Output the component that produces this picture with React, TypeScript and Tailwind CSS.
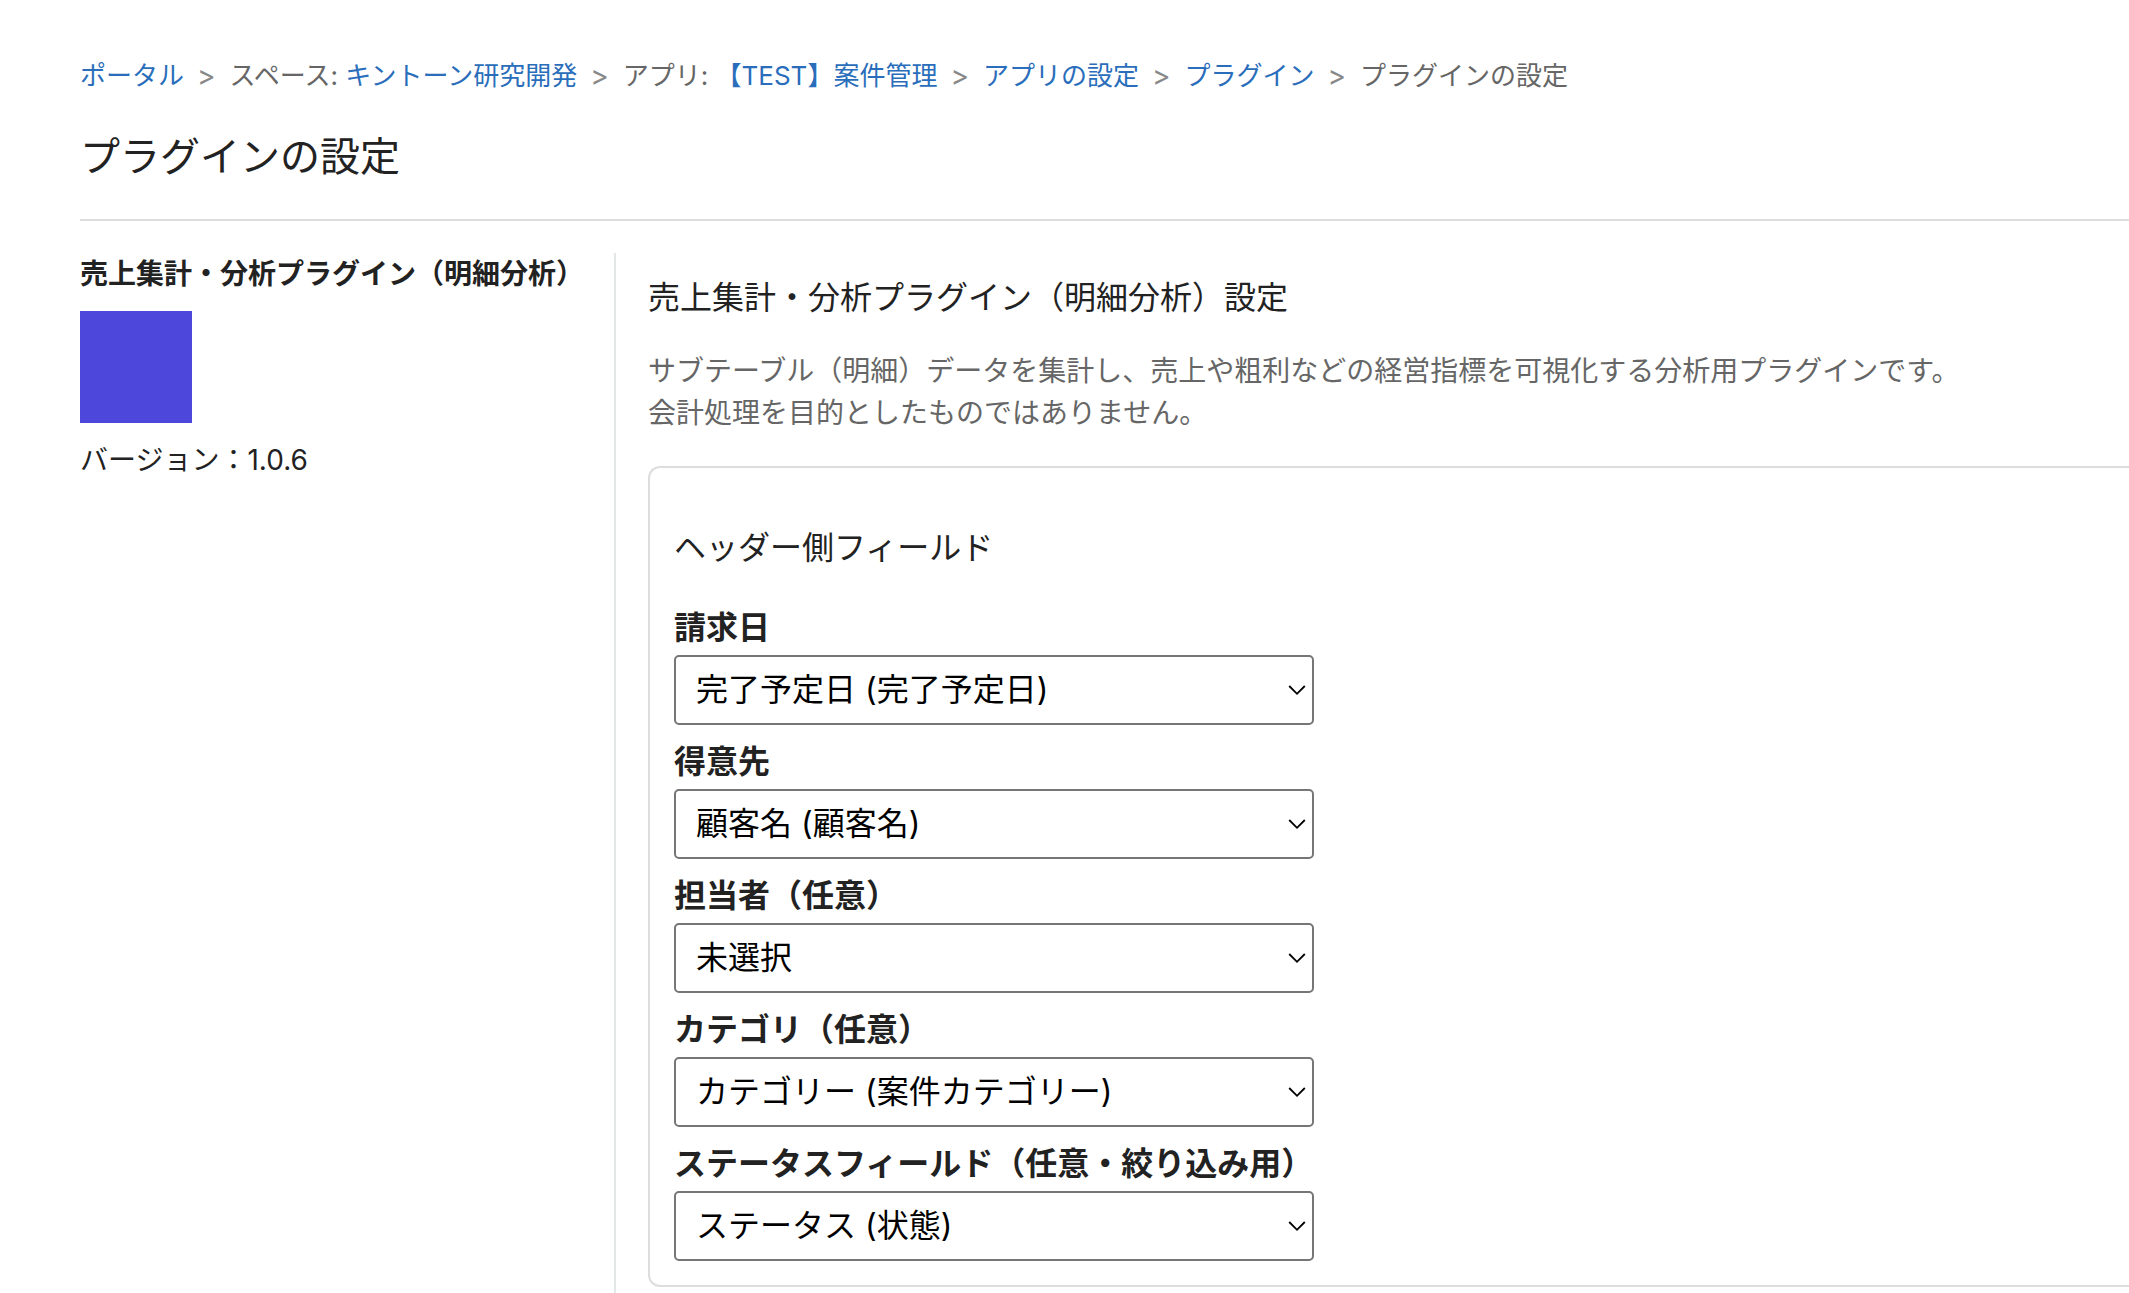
import React from 'react';

type Crumb = {
  prefix?: string;
  label: string;
  href?: string;
};

type Field = {
  id: string;
  label: string;
  value: string;
};

const crumbs: Crumb[] = [
  { label: 'ポータル', href: '#portal' },
  { prefix: 'スペース: ', label: 'キントーン研究開発', href: '#space' },
  { prefix: 'アプリ: ', label: '【TEST】案件管理', href: '#app' },
  { label: 'アプリの設定', href: '#settings' },
  { label: 'プラグイン', href: '#plugins' },
  { label: 'プラグインの設定' },
];

const headerFields: Field[] = [
  { id: 'billing-date', label: '請求日', value: '完了予定日 (完了予定日)' },
  { id: 'customer', label: '得意先', value: '顧客名 (顧客名)' },
  { id: 'assignee', label: '担当者（任意）', value: '未選択' },
  { id: 'category', label: 'カテゴリ（任意）', value: 'カテゴリー (案件カテゴリー)' },
  { id: 'status', label: 'ステータスフィールド（任意・絞り込み用）', value: 'ステータス (状態)' },
];

function Breadcrumbs() {
  return (
    <nav aria-label="パンくずリスト">
      <ol className="flex flex-wrap items-center text-[26px] leading-10 text-[#666666]">
        {crumbs.map((crumb, i) => (
          <li key={crumb.label} className="flex items-center whitespace-pre">
            {i > 0 && <span aria-hidden="true" className="pl-[13px] pr-[14px] text-[28px] leading-10 text-[#888888]">&gt;</span>}
            {crumb.prefix}
            {crumb.href ? (
              <a href={crumb.href} className="text-[#2a6ebb] hover:underline">{crumb.label}</a>
            ) : (
              <span aria-current="page">{crumb.label}</span>
            )}
          </li>
        ))}
      </ol>
    </nav>
  );
}

function SelectField({ id, label, value }: Field) {
  return (
    <div>
      <label htmlFor={id} className="block mb-[3px] text-[32px] leading-[48px] font-bold">{label}</label>
      <div className="relative w-full max-w-[640px]">
        <select
          id={id}
          defaultValue={value}
          className="block w-full h-[70px] pl-5 pr-12 appearance-none bg-white border-2 border-[#767676] rounded-[5px] text-[32px] leading-[48px] text-black"
        >
          <option value={value}>{value}</option>
          {value !== '未選択' && <option value="未選択">未選択</option>}
        </select>
        <svg className="absolute right-2 top-1/2 -translate-y-1/2 pointer-events-none" width="18" height="12" viewBox="0 0 18 12" fill="none" stroke="black" strokeWidth="1.8">
          <path d="M1.2 2L9 9.8L16.8 2" />
        </svg>
      </div>
    </div>
  );
}

export default function App() {
  return (
    <div className="min-h-screen flex flex-col pl-20 bg-white text-[#222222] font-['Inter','Noto_Sans_CJK_JP',sans-serif]">
      <header className="pt-14 pb-8 border-b-2 border-[#dddddd]">
        <Breadcrumbs />
        <h1 className="mt-[31px] text-[40px] leading-[60px]">プラグインの設定</h1>
      </header>

      <div className="flex-1 flex pt-8">
        <aside className="w-[534px] shrink-0">
          <h2 className="text-[28px] leading-[42px] font-bold whitespace-nowrap">売上集計・分析プラグイン（明細分析）</h2>
          <div className="w-28 h-28 mt-4 bg-[#4d47db]" />
          <p className="mt-4 text-[28px] leading-[42px]">バージョン：1.0.6</p>
        </aside>

        <main className="flex-1 min-w-0 pl-8 border-l-2 border-[#e3e7e8]">
          <h2 className="mt-[21px] text-[32px] leading-[48px]">売上集計・分析プラグイン（明細分析）設定</h2>
          <p className="mt-7 text-[28px] leading-[42px] text-[#666666]">
            サブテーブル（明細）データを集計し、売上や粗利などの経営指標を可視化する分析用プラグインです。
            <br />
            会計処理を目的としたものではありません。
          </p>

          <section className="mt-8 p-6 border-2 border-r-0 border-[#dddddd] rounded-l-xl">
            <h3 className="my-8 text-[32px] leading-[48px]">ヘッダー側フィールド</h3>
            <div className="flex flex-col gap-[13px]">
              {headerFields.map((field) => (
                <SelectField key={field.id} {...field} />
              ))}
            </div>
          </section>
        </main>
      </div>
    </div>
  );
}
